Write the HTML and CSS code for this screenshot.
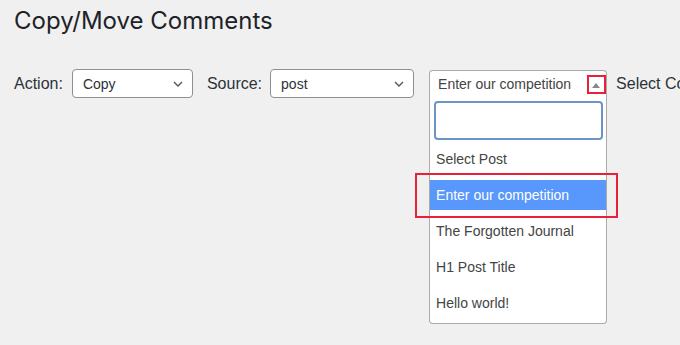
FILE: index.html
```html
<!DOCTYPE html>
<html>
<head>
  <meta charset="UTF-8" />
  <meta name="viewport" content="width=device-width, initial-scale=1.0"/>
  <title>Copy/Move Comments</title>
  <link rel="stylesheet" href="styles.css">
</head>
<body>

  <div class="wrap">
    <h1>Copy/Move Comments</h1>

    <div class="controls">
      <label class="field-label">Action:</label>
      <div class="select select-action">
        <span>Copy</span>
        <svg class="chevron" width="10" height="6" viewBox="0 0 10 6"><polyline points="1,1 5,5 9,1" fill="none" stroke="#50575e" stroke-width="1.4"/></svg>
      </div>

      <label class="field-label">Source:</label>
      <div class="select select-source">
        <span>post</span>
        <svg class="chevron" width="10" height="6" viewBox="0 0 10 6"><polyline points="1,1 5,5 9,1" fill="none" stroke="#50575e" stroke-width="1.4"/></svg>
      </div>

      <div class="combo">
        <div class="combo-head">
          <span>Enter our competition</span>
          <span class="combo-arrow"></span>
          <span class="mark mark-arrow"></span>
        </div>
        <div class="combo-drop">
          <div class="combo-search"><input type="text"></div>
          <ul class="combo-list">
            <li>Select Post</li>
            <li class="active">Enter our competition</li>
            <li>The Forgotten Journal</li>
            <li>H1 Post Title</li>
            <li>Hello world!</li>
          </ul>
          <span class="mark mark-option"></span>
        </div>
      </div>

      <label class="field-label">Select Comments</label>
    </div>
  </div>

</body>
</html>
```

FILE: styles.css
```css
body {
  margin: 0;
  background: #f0f0f1;
  font-family: "Liberation Sans", Arial, sans-serif;
  color: #1d2327;
}

.wrap {
  box-sizing: border-box;
  height: 345px;
  padding: 8px 0 0 14px;
  overflow: hidden;
}

h1 {
  margin: 0;
  font-family: Inter, "Liberation Sans", sans-serif;
  font-size: 24px;
  font-weight: 400;
  line-height: 26px;
  color: #1d2327;
}

.controls {
  display: flex;
  align-items: center;
  margin-top: 35px;
  white-space: nowrap;
}

.controls > * {
  flex-shrink: 0;
}

.field-label {
  font-size: 16px;
  color: #2c3338;
}

.select {
  display: flex;
  align-items: center;
  justify-content: space-between;
  box-sizing: border-box;
  height: 29px;
  margin-left: 9px;
  margin-right: 14px;
  padding: 0 9px 0 10px;
  background: #fff;
  border: 1px solid #8c8f94;
  border-radius: 4px;
  font-size: 14px;
  color: #2c3338;
}

.select-action { width: 121px; }
.select-source { width: 144px; margin-left: 8px; margin-right: 15px; }

.combo {
  position: relative;
  width: 178px;
  margin-right: 9px;
}

.combo-head {
  position: relative;
  box-sizing: border-box;
  height: 28px;
  padding: 0 0 0 8px;
  display: flex;
  align-items: center;
  background: #fff;
  border: 1px solid #aaa;
  border-bottom-color: #ddd;
  border-radius: 4px 4px 0 0;
  font-size: 14px;
  color: #444;
}

.combo-arrow {
  position: absolute;
  right: 6px;
  top: 12px;
  border-left: 4px solid transparent;
  border-right: 4px solid transparent;
  border-bottom: 5px solid #888;
}

.combo-drop {
  position: absolute;
  left: 0;
  right: 0;
  top: 27px;
  box-sizing: border-box;
  background: #fff;
  border: 1px solid #aaa;
  border-top: none;
  border-radius: 0 0 4px 4px;
}

.combo-search {
  padding: 4px 3px 0 4px;
}

.combo-search input {
  display: block;
  box-sizing: border-box;
  width: 100%;
  height: 39px;
  margin: 0;
  border: 2px solid #6a95c6;
  border-radius: 4px;
  outline: none;
}

.combo-list {
  list-style: none;
  margin: 4px 0 5px 0;
  padding: 0;
  font-size: 14px;
  color: #444;
}

.combo-list li {
  height: 30px;
  line-height: 30px;
  padding: 0 6px;
  margin-top: 6px;
}

.combo-list li:first-child {
  margin-top: 0;
}

.combo-list li.active {
  background: #5897fb;
  color: #fff;
}

.mark {
  position: absolute;
  box-sizing: border-box;
  border: 2px solid #e8213b;
}

.mark-arrow {
  right: 0;
  top: 4px;
  width: 19px;
  height: 19px;
}

.mark-option {
  left: -15px;
  right: -12px;
  top: 76px;
  height: 45px;
}
```
